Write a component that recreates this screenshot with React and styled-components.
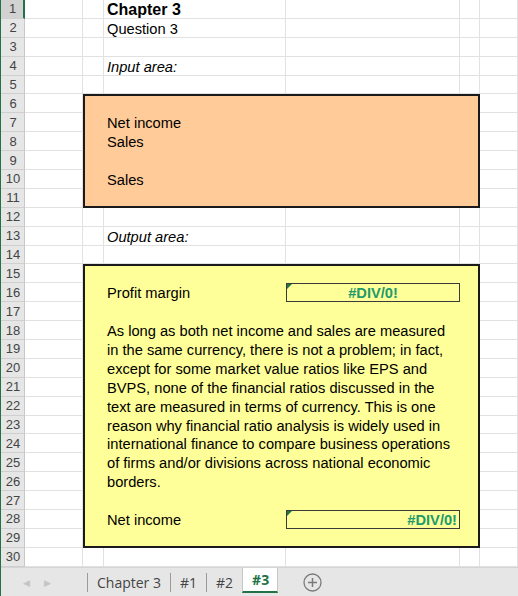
import React from 'react';
import styled, { createGlobalStyle, css } from 'styled-components';

const ROW_H = 18.9;
const ROWS = 30;
const DATA_COLS = 6;

const GlobalStyle = createGlobalStyle`
	html, body {
		margin: 0;
		padding: 0;
		background: #ffffff;
		overflow: hidden;
	}
	body {
		font-family: "Liberation Sans", Arial, sans-serif;
	}
`;

const Window = styled.div`
	width: 518px;
	height: 596px;
	display: flex;
	flex-direction: column;
	border-left: 1px solid #217346;
	box-sizing: border-box;
	background: #ffffff;
`;

const SheetArea = styled.div`
	height: 568px;
	overflow: hidden;
`;

const Sheet = styled.div`
	display: grid;
	grid-template-columns: 24px 58px 21px 182px 174px 20px 1fr;
	grid-template-rows: repeat(${ROWS}, ${ROW_H}px);
`;

const RowHeader = styled.div`
	grid-column: 1;
	grid-row: ${(p) => p.row};
	background: ${(p) => (p.selected ? '#d2d2d2' : '#e6e6e6')};
	border-bottom: 1px solid #cfcfcf;
	border-right: ${(p) => (p.selected ? '2px solid #217346' : '1px solid #c8c8c8')};
	box-sizing: border-box;
	color: #444444;
	font-size: 13px;
	display: flex;
	align-items: center;
	justify-content: center;
	padding-left: 1px;
`;

const Cell = styled.div`
	grid-column: ${(p) => p.col};
	grid-row: ${(p) => p.row};
	border-right: 1px solid #e1e1e1;
	border-bottom: 1px solid #e1e1e1;
	box-sizing: border-box;
`;

const Box = styled.div`
	grid-column: 3 / 7;
	grid-row: ${(p) => p.from} / ${(p) => p.to};
	background: ${(p) => p.fill};
	border: 2px solid #1a1a1a;
	box-sizing: border-box;
	z-index: 1;
`;

const Text = styled.div`
	grid-column: ${(p) => p.col || '4 / 7'};
	grid-row: ${(p) => p.row};
	z-index: 2;
	padding-left: 3px;
	padding-top: 1px;
	font-size: ${(p) => (p.big ? '16px' : '14.67px')};
	font-weight: ${(p) => (p.big ? 'bold' : 'normal')};
	font-style: ${(p) => (p.italic ? 'italic' : 'normal')};
	line-height: ${ROW_H}px;
	color: #000000;
	white-space: nowrap;
`;

const ValueCell = styled.div`
	grid-column: 5;
	grid-row: ${(p) => p.row};
	z-index: 2;
	position: relative;
	border: 1px solid #3a3a3a;
	box-sizing: border-box;
	display: flex;
	align-items: center;
	justify-content: ${(p) => (p.align === 'right' ? 'flex-end' : 'center')};
	padding: 1px 2px 0;
	font-size: 14.67px;
	font-weight: bold;
	color: #209a6b;
	&::before {
		content: '';
		position: absolute;
		top: 0;
		left: 0;
		border-top: 5px solid #1e7a3c;
		border-right: 5px solid transparent;
	}
`;

const TabBar = styled.div`
	flex: 1;
	display: flex;
	align-items: stretch;
	background: #e6e6e6;
	border-top: 1px solid #d4d4d4;
	font-family: "Open Sans", "Liberation Sans", sans-serif;
	font-size: 14px;
	color: #444444;
`;

const NavArrows = styled.div`
	width: 86px;
	display: flex;
	align-items: center;
	gap: 14px;
	padding-left: 22px;
	box-sizing: border-box;
	color: #c4c4c4;
	font-size: 9px;
`;

const Tab = styled.div`
	display: flex;
	align-items: center;
	padding: 0 ${(p) => p.pad || 10}px;
	border-left: 1px solid #9a9a9a;
	margin: 5px 0 4px;
	${(p) =>
		p.active &&
		css`
			margin: 0 0 3px;
			background: #ffffff;
			border-left: 1px solid #c6c6c6;
			border-right: 1px solid #c6c6c6;
			border-bottom: 2px solid #217346;
			color: #217346;
			font-weight: bold;
			padding: 0 8px 0 9px;
		`}
`;

const AddSheet = styled.div`
	display: flex;
	align-items: center;
	margin-left: 25px;
	color: #7a7a7a;
`;

const lines = [
	'As long as both net income and sales are measured',
	'in the same currency, there is not a problem; in fact,',
	'except for some market value ratios like EPS and',
	'BVPS, none of the financial ratios discussed in the',
	'text are measured in terms of currency. This is one',
	'reason why financial ratio analysis is widely used in',
	'international finance to compare business operations',
	'of firms and/or divisions across national economic',
	'borders.'
];

const rows = Array.from({ length: ROWS }, (_, i) => i + 1);

function App() {
	return (
		<>
			<GlobalStyle />
			<Window>
				<SheetArea>
					<Sheet>
						{rows.map((r) => (
							<React.Fragment key={r}>
								<RowHeader row={r} selected={r === 1}>
									{r}
								</RowHeader>
								{Array.from({ length: DATA_COLS }, (_, c) => (
									<Cell key={c} row={r} col={c + 2} />
								))}
							</React.Fragment>
						))}

						<Text row={1} big>
							Chapter 3
						</Text>
						<Text row={2}>Question 3</Text>
						<Text row={4} italic>
							Input area:
						</Text>

						<Box from={6} to={12} fill="#ffcc99" />
						<Text row={7}>Net income</Text>
						<Text row={8}>Sales</Text>
						<Text row={10}>Sales</Text>

						<Text row={13} italic>
							Output area:
						</Text>

						<Box from={15} to={30} fill="#ffff99" />
						<Text row={16} col="4">
							Profit margin
						</Text>
						<ValueCell row={16}>#DIV/0!</ValueCell>
						{lines.map((line, i) => (
							<Text key={i} row={18 + i}>
								{line}
							</Text>
						))}
						<Text row={28} col="4">
							Net income
						</Text>
						<ValueCell row={28} align="right">
							#DIV/0!
						</ValueCell>
					</Sheet>
				</SheetArea>

				<TabBar>
					<NavArrows>
						<span>◀</span>
						<span>▶</span>
					</NavArrows>
					<Tab pad={9}>Chapter 3</Tab>
					<Tab pad={9}>#1</Tab>
					<Tab pad={9}>#2</Tab>
					<Tab active>#3</Tab>
					<AddSheet>
						<svg width="19" height="19" viewBox="0 0 19 19">
							<circle cx="9.5" cy="9.5" r="8.5" fill="none" stroke="#7a7a7a" strokeWidth="1.3" />
							<path d="M9.5 5v9M5 9.5h9" stroke="#7a7a7a" strokeWidth="1.5" />
						</svg>
					</AddSheet>
				</TabBar>
			</Window>
		</>
	);
}

export default App;
